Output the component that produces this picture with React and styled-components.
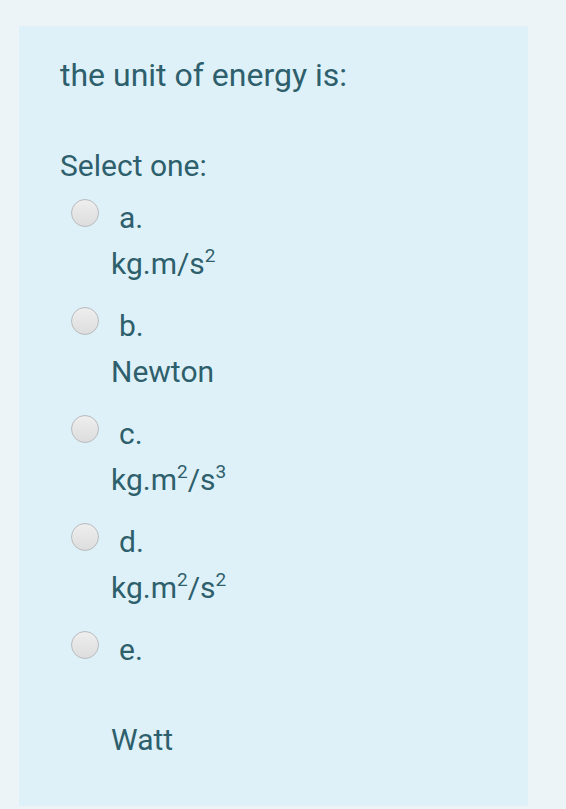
import React from 'react';
import styled, { createGlobalStyle } from 'styled-components';

const Global = createGlobalStyle`
  html, body {
    margin: 0;
    padding: 0;
    background: #ecf4f8;
  }
  body {
    font-family: Roboto, "Liberation Sans", sans-serif;
  }
`;

const Page = styled.div`
  width: 566px;
  height: 809px;
  padding: 26px 38px 3px 19px;
  box-sizing: border-box;
`;

const Panel = styled.div`
  height: 780px;
  background: #dff1f8;
  padding: 30px 0 0 41px;
  box-sizing: border-box;
  color: #2e5f6c;
`;

const Question = styled.p`
  margin: 0;
  font-size: 32px;
  line-height: 38px;
`;

const Prompt = styled.p`
  margin: 54px 0 0;
  font-size: 30px;
  line-height: 36px;
`;

const Options = styled.div`
  display: flex;
  flex-direction: column;
  margin-top: 16px;
`;

const Option = styled.label`
  display: grid;
  grid-template-columns: 51px 1fr;
  align-items: start;
  height: 108px;
`;

const Radio = styled.span`
  width: 28px;
  height: 28px;
  margin: -1px 0 0 11px;
  border-radius: 50%;
  border: 1px solid #b7bbbd;
  background: linear-gradient(#eeeeee, #dddddd);
  box-sizing: border-box;
`;

const Body = styled.div`
  display: flex;
  flex-direction: column;
  font-size: 30px;
  line-height: 36px;
`;

const Letter = styled.span`
  margin-left: 8px;
`;

const Answer = styled.span`
  margin-top: ${(p) => p.gap || 10}px;
  sup {
    font-size: 19px;
    line-height: 0;
    vertical-align: 12px;
  }
`;

const options = [
  { l: 'a.', a: <>kg.m/s<sup>2</sup></> },
  { l: 'b.', a: <>Newton</> },
  { l: 'c.', a: <>kg.m<sup>2</sup>/s<sup>3</sup></> },
  { l: 'd.', a: <>kg.m<sup>2</sup>/s<sup>2</sup></> },
  { l: 'e.', a: <>Watt</>, gap: 54 },
];

export default function App() {
  return (
    <Page>
      <Global />
      <Panel>
        <Question>the unit of energy is:</Question>
        <Prompt>Select one:</Prompt>
        <Options>
          {options.map((o) => (
            <Option key={o.l}>
              <Radio />
              <Body>
                <Letter>{o.l}</Letter>
                <Answer gap={o.gap}>{o.a}</Answer>
              </Body>
            </Option>
          ))}
        </Options>
      </Panel>
    </Page>
  );
}
